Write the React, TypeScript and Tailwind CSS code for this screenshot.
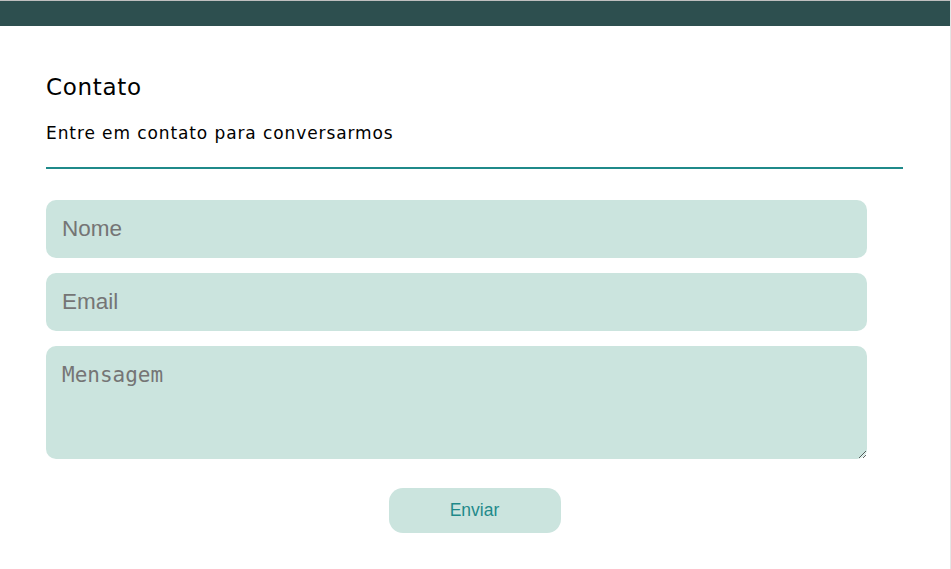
import React from "react";

export default function App() {
  return (
    <div className="min-h-[569px] bg-white border-r border-[#e5e5e5]">
      <div className="h-[26px] border-t border-[#bfbfbf] bg-[#2d4f4f]" />
      <div className="pl-[46px] pr-[47px] pt-[47px]">
        <h1 className="text-[23px] leading-[28px] text-black font-['DejaVu_Sans',sans-serif] tracking-[0.7px]">Contato</h1>
        <p className="mt-[22px] text-[17px] leading-[20px] text-black font-['DejaVu_Sans',sans-serif] tracking-[0.9px]">Entre em contato para conversarmos</p>
        <div className="mt-[24px] h-[2px] bg-[#1f8a8a]" />
        <form className="mt-[31px] flex flex-col gap-[15px]" onSubmit={(e) => e.preventDefault()}>
          <input
            placeholder="Nome"
            className="w-[821px] h-[58px] rounded-[10px] bg-[#cbe4de] px-[16px] text-[22.5px] font-['Liberation_Sans',Arial,sans-serif] placeholder:text-[#757575] outline-none"
          />
          <input
            placeholder="Email"
            className="w-[821px] h-[58px] rounded-[10px] bg-[#cbe4de] px-[16px] text-[22.5px] font-['Liberation_Sans',Arial,sans-serif] placeholder:text-[#757575] outline-none"
          />
          <textarea
            placeholder="Mensagem"
            className="w-[821px] h-[113px] rounded-[10px] bg-[#cbe4de] px-[16px] pt-[16px] text-[21px] leading-[26px] font-['DejaVu_Sans_Mono',monospace] placeholder:text-[#757575] outline-none"
          />
          <div className="flex justify-center mt-[14px]">
            <button className="w-[172px] h-[45px] rounded-[14px] bg-[#cbe4de] text-[#1f8a8a] text-[17.5px] font-['Liberation_Sans',Arial,sans-serif]">
              Enviar
            </button>
          </div>
        </form>
      </div>
    </div>
  );
}
